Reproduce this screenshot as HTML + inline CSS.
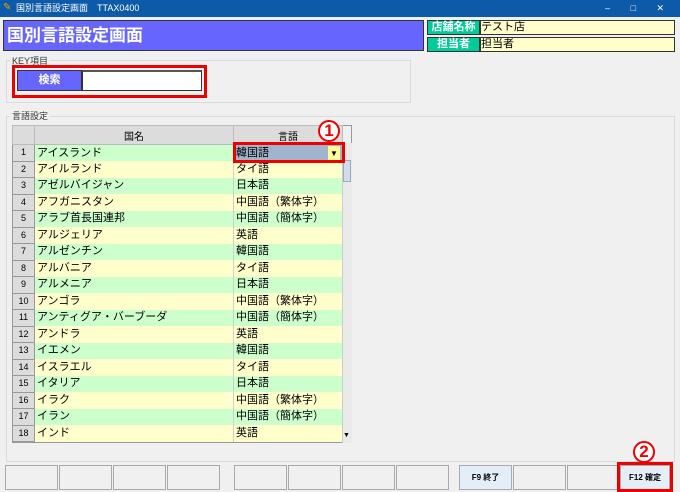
<!DOCTYPE html><html><head><meta charset="utf-8"><style>
*{box-sizing:border-box;margin:0;padding:0}
body{width:680px;height:492px;background:#f0f0f0;font-family:"Liberation Sans","Noto Sans CJK JP",sans-serif;position:relative;overflow:hidden;font-size:11px;color:#000}
.a{position:absolute}
.tb{left:0;top:0;width:680px;height:17px;background:#0c5aa8;color:#fff;font-size:9px;line-height:17px;padding-left:16px}
.lbl{background:#00cc99;color:#fff;border:1px solid #333;font-weight:bold;text-align:center;font-size:11px;line-height:13px}
.val{background:#ffffcc;border:1px solid #333;font-size:11px;line-height:13px}
.grp{border:1px solid #d6dbe2}
table{border-collapse:collapse;position:absolute;left:12px;top:125px;width:331px;font-size:11px}
td{height:16.5px;line-height:15px;padding:0 2px;border-right:1px solid #cfcfcf}
td.n{width:22px;background:#dcdcdc;border:1px solid #999;text-align:center;font-size:9px}
th{height:19px;background:#dcdcdc;border:1px solid #bbb;font-weight:normal;font-size:10px}
tr.g td:not(.n){background:#ccffcc}tr.y td:not(.n){background:#ffffcc}
.btn{top:465px;height:25px;width:53px;border:1px solid #aaa;background:#f0f0f0;font-size:8px;font-weight:bold;text-align:center;line-height:23px}
.circ{width:22px;height:22px;border:2px solid #e00;border-radius:50%;color:#e00;font-weight:bold;font-size:17px;text-align:center;line-height:18px;background:#fff}
</style></head><body>
<div class="a tb">国別言語設定画面　TTAX0400<span style="position:absolute;right:16px">✕</span><span style="position:absolute;right:70px">–</span><span style="position:absolute;right:44px">□</span></div>
<div class="a" style="left:3px;top:3px;width:10px;height:10px;color:#f90;font-size:10px;line-height:10px">✎</div>
<div class="a" style="left:3px;top:20px;width:421px;height:31px;background:#6666ff;border:1px solid #333;color:#fff;font-weight:bold;font-size:17px;line-height:29px;padding-left:3px">国別言語設定画面</div>
<div class="a lbl" style="left:427px;top:20px;width:53px;height:15px">店舗名称</div>
<div class="a val" style="left:480px;top:20px;width:195px;height:15px">テスト店</div>
<div class="a lbl" style="left:427px;top:37px;width:53px;height:15px">担当者</div>
<div class="a val" style="left:480px;top:37px;width:195px;height:15px">担当者</div>
<div class="a grp" style="left:6px;top:60px;width:405px;height:43px"></div>
<div class="a" style="left:10px;top:54px;font-size:9px;background:#f0f0f0;color:#333;padding:0 2px">KEY項目</div>
<div class="a" style="left:12px;top:65px;width:195px;height:33px;border:3px solid #e00"></div>
<div class="a" style="left:17px;top:70px;width:65px;height:21px;background:#6666ff;border:1px solid #333;color:#fff;font-weight:bold;text-align:center;line-height:19px">検索</div>
<div class="a" style="left:82px;top:70px;width:120px;height:21px;background:#fff;border:1px solid #333;border-top:2px solid #555"></div>
<div class="a grp" style="left:6px;top:116px;width:669px;height:346px"></div>
<div class="a" style="left:10px;top:109px;font-size:9px;background:#f0f0f0;color:#333;padding:0 2px">言語設定</div>
<div class="a" style="left:12px;top:125px;width:340px;height:318px;border:1px solid #999;background:#f0f0f0"></div>
<table><tr><th style="width:22px"></th><th style="width:199px">国名</th><th>言語</th></tr>
<tr class="g"><td class="n">1</td><td>アイスランド</td><td style="background:#a0b4cc">韓国語<span style="float:right;background:#ffff99;width:12px;text-align:center;font-size:8px">▼</span></td></tr>
<tr class="y"><td class="n">2</td><td>アイルランド</td><td>タイ語</td></tr>
<tr class="g"><td class="n">3</td><td>アゼルバイジャン</td><td>日本語</td></tr>
<tr class="y"><td class="n">4</td><td>アフガニスタン</td><td>中国語（繁体字）</td></tr>
<tr class="g"><td class="n">5</td><td>アラブ首長国連邦</td><td>中国語（簡体字）</td></tr>
<tr class="y"><td class="n">6</td><td>アルジェリア</td><td>英語</td></tr>
<tr class="g"><td class="n">7</td><td>アルゼンチン</td><td>韓国語</td></tr>
<tr class="y"><td class="n">8</td><td>アルバニア</td><td>タイ語</td></tr>
<tr class="g"><td class="n">9</td><td>アルメニア</td><td>日本語</td></tr>
<tr class="y"><td class="n">10</td><td>アンゴラ</td><td>中国語（繁体字）</td></tr>
<tr class="g"><td class="n">11</td><td>アンティグア・バーブーダ</td><td>中国語（簡体字）</td></tr>
<tr class="y"><td class="n">12</td><td>アンドラ</td><td>英語</td></tr>
<tr class="g"><td class="n">13</td><td>イエメン</td><td>韓国語</td></tr>
<tr class="y"><td class="n">14</td><td>イスラエル</td><td>タイ語</td></tr>
<tr class="g"><td class="n">15</td><td>イタリア</td><td>日本語</td></tr>
<tr class="y"><td class="n">16</td><td>イラク</td><td>中国語（繁体字）</td></tr>
<tr class="g"><td class="n">17</td><td>イラン</td><td>中国語（簡体字）</td></tr>
<tr class="y"><td class="n">18</td><td>インド</td><td>英語</td></tr>
</table>
<div class="a" style="left:342px;top:143px;width:10px;height:300px;background:#eaeaea;border-left:1px solid #ccc"></div>
<div class="a" style="left:343px;top:160px;width:8px;height:22px;background:#cfdcec;border:1px solid #9ab"></div>
<div class="a" style="left:343px;top:432px;font-size:7px">▼</div>
<div class="a" style="left:233px;top:142px;width:112px;height:21px;border:3px solid #e00"></div>
<div class="a circ" style="left:318px;top:120px">1</div>
<div class="a btn" style="left:5px"></div><div class="a btn" style="left:59px"></div><div class="a btn" style="left:113px"></div><div class="a btn" style="left:167px"></div>
<div class="a btn" style="left:234px"></div><div class="a btn" style="left:288px"></div><div class="a btn" style="left:342px"></div><div class="a btn" style="left:396px"></div>
<div class="a btn" style="left:459px;background:#e4eef8">F9 終了</div>
<div class="a btn" style="left:513px"></div><div class="a btn" style="left:567px"></div>
<div class="a btn" style="left:620px;width:50px;background:#e4eef8">F12 確定</div>
<div class="a" style="left:617px;top:462px;width:56px;height:30px;border:3px solid #e00"></div>
<div class="a circ" style="left:633px;top:441px">2</div>
</body></html>
